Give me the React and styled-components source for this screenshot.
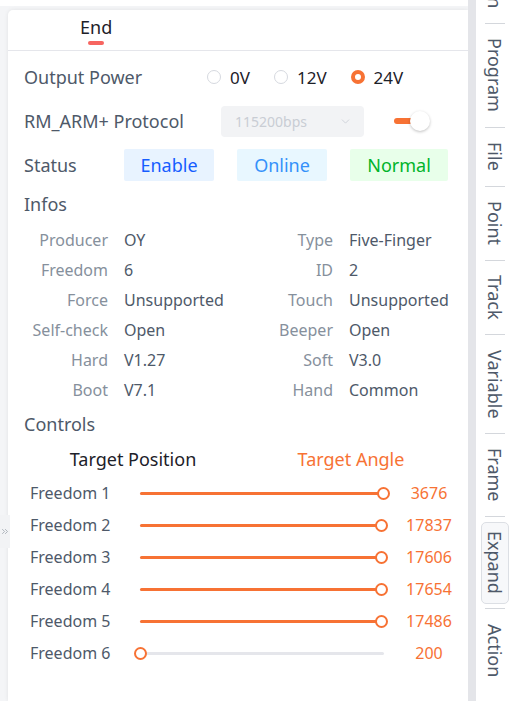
import React from "react";
import styled, { createGlobalStyle } from "styled-components";
import { ChevronDown, ChevronsRight } from "lucide-react";

const Global = createGlobalStyle`
  html, body { margin: 0; padding: 0; background: #fff; }
  body { font-family: "Noto Sans", "Open Sans", sans-serif; }
  * { box-sizing: border-box; }
`;

const ORANGE = "#f77234";

const Page = styled.div`
  position: relative;
  display: flex;
  width: 514px;
  height: 701px;
  overflow: hidden;
  background: #fff;
`;

const Main = styled.div`
  flex: 1;
  min-width: 0;
  display: flex;
  flex-direction: column;
  padding-top: 6px;
`;

const Canvas = styled.div`
  flex: 1;
  background: #f4f5f7;
  padding: 4px 0 0 8px;
  display: flex;
`;

const Card = styled.div`
  flex: 1;
  min-width: 0;
  background: #fff;
  border-top-left-radius: 5px;
  box-shadow: 0 0 4px rgba(0, 0, 0, 0.08);
  display: flex;
  flex-direction: column;
`;

const TabBar = styled.div`
  height: 41px;
  border-bottom: 1px solid #e5e6eb;
  padding-left: 72px;
  display: flex;
`;

const Tab = styled.div`
  position: relative;
  font-size: 18px;
  line-height: 24px;
  padding-top: 5px;
  color: #1d2129;
  &::after {
    content: "";
    position: absolute;
    left: 8px;
    top: 31px;
    width: 16px;
    height: 4px;
    border-radius: 2px;
    background: #f76560;
  }
`;

const Body = styled.div`
  padding: 4px 16px 0 16px;
  display: flex;
  flex-direction: column;
`;

const Row = styled.div`
  height: 44px;
  display: flex;
  align-items: center;
`;

const RowLabel = styled.div`
  width: ${(p) => p.$w}px;
  flex-shrink: 0;
  font-size: 18px;
  color: #4e5969;
`;

const RadioGroup = styled.div`
  display: flex;
  align-items: center;
  gap: 24px;
`;

const RadioItem = styled.label`
  display: flex;
  align-items: center;
  gap: 9px;
  font-size: 17px;
  color: #1d2129;
`;

const RadioDot = styled.span`
  width: 14px;
  height: 14px;
  border-radius: 50%;
  border: ${(p) => (p.$on ? `4px solid ${ORANGE}` : "1px solid #d6d9df")};
  background: #fff;
  flex-shrink: 0;
`;

const Select = styled.div`
  width: 143px;
  height: 31px;
  flex-shrink: 0;
  border-radius: 4px;
  background: #f2f3f5;
  display: flex;
  align-items: center;
  justify-content: space-between;
  padding: 0 12px 0 14px;
  font-size: 14px;
  color: #c9cdd4;
`;

const Switch = styled.div`
  position: relative;
  width: 36px;
  height: 20px;
  flex-shrink: 0;
  margin-left: 30px;
  &::before {
    content: "";
    position: absolute;
    left: 0;
    top: 7px;
    width: 32px;
    height: 6px;
    border-radius: 3px;
    background: ${ORANGE};
  }
  &::after {
    content: "";
    position: absolute;
    right: 0;
    top: 0;
    width: 20px;
    height: 20px;
    border-radius: 50%;
    background: #fff;
    box-shadow: 0 1px 3px rgba(0, 0, 0, 0.25);
  }
`;

const TagGroup = styled.div`
  display: flex;
  gap: 23px;
`;

const Tag = styled.div`
  height: 32px;
  min-width: ${(p) => p.$w}px;
  display: flex;
  align-items: center;
  justify-content: center;
  border-radius: 2px;
  font-size: 18px;
  background: ${(p) => p.$bg};
  color: ${(p) => p.$fg};
`;

const Heading = styled.div`
  height: 34px;
  display: flex;
  align-items: center;
  font-size: 18px;
  color: #4e5969;
`;

const InfoGrid = styled.div`
  margin-top: 4px;
  display: grid;
  grid-template-columns: 84px 93px 100px 1fr;
  column-gap: 16px;
  grid-auto-rows: 30px;
  align-items: center;
  font-size: 16px;
  margin-bottom: 2px;
`;

const InfoLabel = styled.div`
  text-align: right;
  color: #86909c;
  white-space: nowrap;
`;

const InfoValue = styled.div`
  color: #4e5969;
  white-space: nowrap;
`;

const TargetHead = styled.div`
  width: 436px;
  height: 36px;
  display: grid;
  grid-template-columns: 218px 218px;
  align-items: center;
  font-size: 18px;
  text-align: center;
`;

const TargetTitle = styled.div`
  color: ${(p) => (p.$active ? ORANGE : "#1d2129")};
`;

const SliderRow = styled.div`
  height: 32px;
  display: flex;
  align-items: center;
  padding-left: 6px;
`;

const SliderLabel = styled.div`
  width: 110px;
  flex-shrink: 0;
  font-size: 16px;
  color: #4e5969;
`;

const Track = styled.div`
  position: relative;
  width: 244px;
  flex-shrink: 0;
  height: 3px;
  border-radius: 2px;
  background: #e5e6eb;
`;

const Fill = styled.div`
  position: absolute;
  left: 0;
  top: 0;
  height: 3px;
  border-radius: 2px;
  background: ${ORANGE};
`;

const Handle = styled.div`
  position: absolute;
  top: 50%;
  width: 13px;
  height: 13px;
  margin-left: -6.5px;
  margin-top: -6.5px;
  border-radius: 50%;
  background: #fff;
  border: 2px solid ${ORANGE};
`;

const SliderValue = styled.div`
  width: 48px;
  flex-shrink: 0;
  margin-left: 21px;
  text-align: center;
  font-size: 16px;
  color: ${ORANGE};
`;

const Strip = styled.div`
  width: 8px;
  flex-shrink: 0;
  background: #e4e5e9;
`;

const Side = styled.div`
  width: 38px;
  flex-shrink: 0;
  background: #fff;
  display: flex;
  flex-direction: column;
  align-items: center;
  gap: 14.5px;
  margin-top: -65px;
`;

const SideItem = styled.div`
  writing-mode: vertical-rl;
  font-size: 18px;
  line-height: 22px;
  color: #4e5969;
  white-space: nowrap;
  ${(p) =>
    p.$boxed &&
    `
    border: 1px solid #dcdfe4;
    background: #f7f8fa;
    border-radius: 5px;
    padding: 8px 2px 9px;
    margin: -10px 0 -10px;
  `}
`;

const SideSep = styled.div`
  width: 20px;
  height: 1px;
  flex-shrink: 0;
  background: #d4d7dc;
`;

const Collapse = styled.div`
  position: absolute;
  left: 0;
  top: 515px;
  width: 10px;
  height: 33px;
  background: #f2f3f5;
  display: flex;
  align-items: center;
  justify-content: flex-end;
  overflow: hidden;
  color: #86909c;
`;

const infos = [
  ["Producer", "OY", "Type", "Five-Finger"],
  ["Freedom", "6", "ID", "2"],
  ["Force", "Unsupported", "Touch", "Unsupported"],
  ["Self-check", "Open", "Beeper", "Open"],
  ["Hard", "V1.27", "Soft", "V3.0"],
  ["Boot", "V7.1", "Hand", "Common"],
];

const sliders = [
  ["Freedom 1", 99.6, "3676"],
  ["Freedom 2", 98.8, "17837"],
  ["Freedom 3", 98.8, "17606"],
  ["Freedom 4", 98.8, "17654"],
  ["Freedom 5", 98.8, "17486"],
  ["Freedom 6", 0, "200"],
];

const sideItems = ["Function", "Program", "File", "Point", "Track", "Variable", "Frame", "Expand", "Action"];

export default function App() {
  return (
    <Page>
      <Global />
      <Main>
        <Canvas>
          <Card>
            <TabBar>
              <Tab>End</Tab>
            </TabBar>
            <Body>
              <Row>
                <RowLabel $w={183}>Output Power</RowLabel>
                <RadioGroup>
                  <RadioItem><RadioDot />0V</RadioItem>
                  <RadioItem><RadioDot />12V</RadioItem>
                  <RadioItem><RadioDot $on />24V</RadioItem>
                </RadioGroup>
              </Row>
              <Row>
                <RowLabel $w={197}>RM_ARM+ Protocol</RowLabel>
                <Select>
                  115200bps
                  <ChevronDown size={13} strokeWidth={1.5} />
                </Select>
                <Switch />
              </Row>
              <Row>
                <RowLabel $w={100}>Status</RowLabel>
                <TagGroup>
                  <Tag $w={90} $bg="#e8f3ff" $fg="#165dff">Enable</Tag>
                  <Tag $w={90} $bg="#e8f7ff" $fg="#3491fa">Online</Tag>
                  <Tag $w={98} $bg="#e8ffea" $fg="#00b42a">Normal</Tag>
                </TagGroup>
              </Row>
              <Heading>Infos</Heading>
              <InfoGrid>
                {infos.map((r) => (
                  <React.Fragment key={r[0]}>
                    <InfoLabel>{r[0]}</InfoLabel>
                    <InfoValue>{r[1]}</InfoValue>
                    <InfoLabel>{r[2]}</InfoLabel>
                    <InfoValue>{r[3]}</InfoValue>
                  </React.Fragment>
                ))}
              </InfoGrid>
              <Heading>Controls</Heading>
              <TargetHead>
                <TargetTitle>Target Position</TargetTitle>
                <TargetTitle $active>Target Angle</TargetTitle>
              </TargetHead>
              {sliders.map(([label, pct, val]) => (
                <SliderRow key={label}>
                  <SliderLabel>{label}</SliderLabel>
                  <Track>
                    <Fill style={{ width: `${pct}%` }} />
                    <Handle style={{ left: `${pct}%` }} />
                  </Track>
                  <SliderValue>{val}</SliderValue>
                </SliderRow>
              ))}
            </Body>
          </Card>
        </Canvas>
      </Main>
      <Strip />
      <Side>
        {sideItems.map((s, i) => (
          <React.Fragment key={s}>
            {i > 0 && <SideSep />}
            <SideItem $boxed={s === "Expand"}>{s}</SideItem>
          </React.Fragment>
        ))}
      </Side>
      <Collapse>
        <ChevronsRight size={11} strokeWidth={1.5} />
      </Collapse>
    </Page>
  );
}
